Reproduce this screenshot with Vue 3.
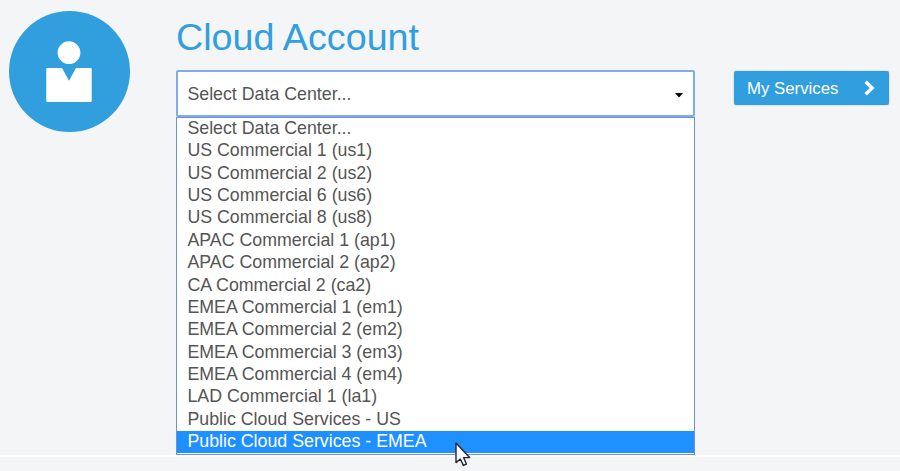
<script setup>
import { ref } from 'vue'

const options = [
  'Select Data Center...',
  'US Commercial 1 (us1)',
  'US Commercial 2 (us2)',
  'US Commercial 6 (us6)',
  'US Commercial 8 (us8)',
  'APAC Commercial 1 (ap1)',
  'APAC Commercial 2 (ap2)',
  'CA Commercial 2 (ca2)',
  'EMEA Commercial 1 (em1)',
  'EMEA Commercial 2 (em2)',
  'EMEA Commercial 3 (em3)',
  'EMEA Commercial 4 (em4)',
  'LAD Commercial 1 (la1)',
  'Public Cloud Services - US',
  'Public Cloud Services - EMEA',
]
const selected = ref(options[0])
const active = ref(options.length - 1)
</script>

<template>
  <div class="page">
    <main class="account">
      <div class="avatar">
        <svg class="person" viewBox="0 0 46 61" width="46" height="61">
          <circle cx="23" cy="11.7" r="11.4" />
          <path d="M1.3 27H16L23 39.7L30 27H44.7Q45.7 27 45.7 28V60Q45.7 61 44.7 61H1.3Q.3 61 .3 60V28Q.3 27 1.3 27Z" />
        </svg>
      </div>

      <section class="center">
        <h1 class="title">Cloud Account</h1>
        <div class="select">
          <span>{{ selected }}</span>
          <svg class="caret" viewBox="0 0 8 4" width="8" height="4"><path d="M0 0H8L4.5 4H3.5Z" /></svg>
        </div>
        <ul class="options">
          <li
            v-for="(option, i) in options"
            :key="option"
            class="option"
            :class="{ active: i === active }"
            @mouseenter="active = i"
            @click="selected = option"
          >{{ option }}</li>
        </ul>
      </section>

      <button class="services" type="button">
        <span>My Services</span>
        <svg viewBox="0 0 11 16" width="11" height="16"><path d="M1.6 1.8L8.2 8L1.6 14.2" /></svg>
      </button>
    </main>
    <footer class="footer"></footer>

    <svg class="cursor" viewBox="0 0 16 25" width="16" height="25">
      <path d="M1 1V20.6L5.3 17L8.4 23.4L11.4 22L8.6 15.6H14.6Z" />
    </svg>
  </div>
</template>

<style>
body {
  margin: 0;
  background: #f3f5f7;
}
</style>

<style scoped>
.page {
  position: relative;
  width: 900px;
  height: 471px;
  overflow: hidden;
  background: #f3f5f7;
  font-family: "Liberation Sans", Arial, sans-serif;
  color: #555;
}
.account {
  display: flex;
  align-items: flex-start;
  height: 455px;
}
.avatar {
  display: flex;
  flex: none;
  justify-content: center;
  box-sizing: border-box;
  width: 121px;
  height: 121px;
  margin: 11px 46px 0 9px;
  padding: 30px 1px 0 0;
  border-radius: 50%;
  background: #319fdd;
}
.person {
  margin-left: -1px;
  fill: #fff;
}
.center {
  width: 519px;
}
.title {
  height: 54px;
  margin: 0;
  padding-top: 16px;
  color: #319fdd;
  font-size: 37.7px;
  font-weight: 400;
  line-height: 42px;
}
.select {
  display: flex;
  align-items: center;
  justify-content: space-between;
  box-sizing: border-box;
  height: 47px;
  padding: 2px 10px 0 9.4px;
  border: 2px solid #83abec;
  border-radius: 2px;
  background: #fff;
  font-size: 17.8px;
}
.caret {
  fill: #000;
}
.options {
  box-sizing: border-box;
  height: 338px;
  margin: 0;
  padding: 0;
  border: 1px solid #6b92d6;
  background: #fff;
  list-style: none;
}
.option {
  height: 22.36px;
  padding-left: 10.4px;
  font-size: 17.8px;
  line-height: 21.4px;
  white-space: nowrap;
}
.option.active {
  background: #1e90ff;
  color: #fff;
}
.services {
  display: flex;
  align-items: center;
  justify-content: space-between;
  width: 155px;
  height: 34px;
  margin: 71px 0 0 39px;
  padding: 0 14px 0 13px;
  border: 0;
  border-radius: 2px;
  background: #319fdd;
  box-shadow: 0 0 1px 1px #dce7ef;
  color: #fff;
  font-family: inherit;
  font-size: 16.8px;
}
.services span {
  padding-top: 1px;
}
.services path {
  fill: none;
  stroke: #fff;
  stroke-width: 3.3;
}
.footer {
  height: 14px;
  border-top: 2px solid #fff;
}
.cursor {
  position: absolute;
  left: 455px;
  top: 442px;
}
.cursor path {
  fill: #fff;
  stroke: #252538;
  stroke-width: 1.4;
  stroke-linejoin: round;
}
</style>
